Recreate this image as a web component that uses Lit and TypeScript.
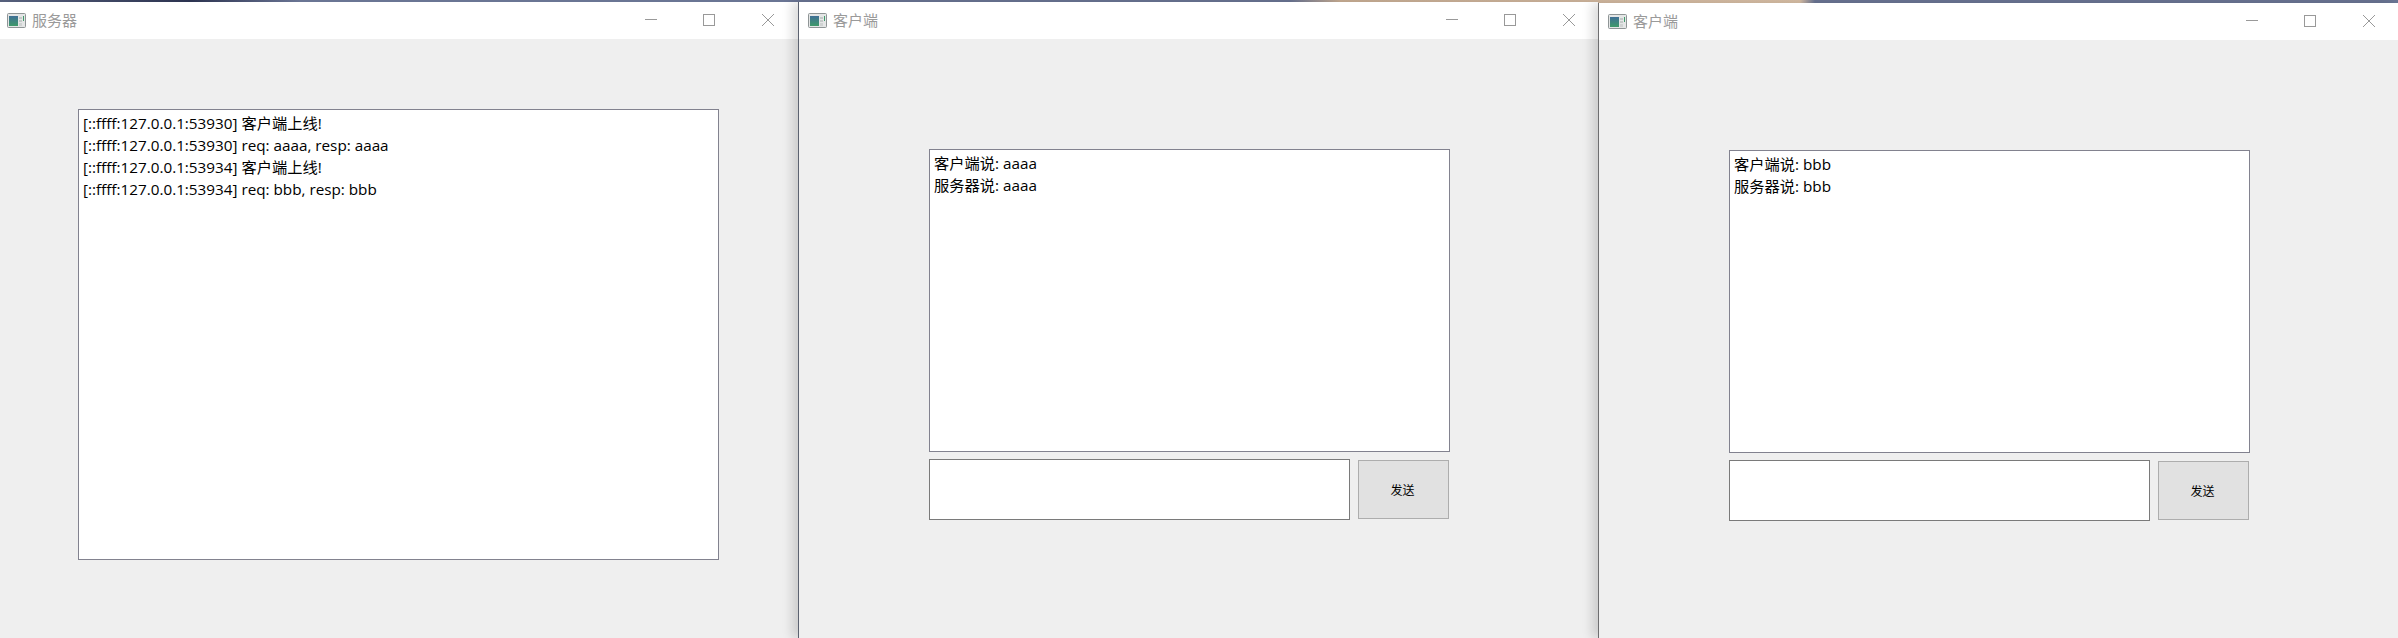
import { LitElement, html, css } from "lit";
import { customElement, property } from "lit/decorators.js";

const FONT = css`"Open Sans", "Noto Sans CJK SC", sans-serif`;

@customElement("win-frame")
class WinFrame extends LitElement {
  @property() label = "";
  static styles = css`
    :host { display: flex; flex-direction: column; height: 100%; background: #efefef; }
    .bar { height: 37px; flex: none; background: #fff; display: flex; align-items: center; padding-left: var(--bar-pad, 9px); }
    .icon { width: 19px; height: 17px; flex: none; margin-right: 6px; }
    .title { font: 15px/37px ${FONT}; color: #9a9a9a; flex: 1; }
    .ctl { display: flex; gap: 45px; flex: none; margin-right: var(--ctl-pad, 22px); }
    .ctl svg { width: 13px; height: 13px; display: block; }
    .ctl svg:last-child { margin-left: 1px; }
    .body { flex: 1; min-height: 0; }
  `;
  render() {
    return html`<div class="bar">
        <svg class="icon" viewBox="0 0 19 17">
          <defs>
            <linearGradient id="g" x1="0" y1="0" x2="0" y2="1">
              <stop offset="0" stop-color="#3f6f96" />
              <stop offset="1" stop-color="#3f9a6a" />
            </linearGradient>
          </defs>
          <rect x=".5" y="1.5" width="18" height="14" rx="1" fill="#e4e6e6" stroke="#8f9596" />
          <rect x="2" y="4" width="9" height="10" fill="url(#g)" />
          <rect x="12" y="5" width="3" height="2" fill="#c4c8c8" />
          <rect x="12" y="8" width="3" height="2" fill="#c4c8c8" />
          <rect x="12" y="11" width="3" height="3" fill="#cfd2d2" />
          <rect x="16" y="4" width="1" height="5" fill="#3f9a6a" />
        </svg>
        <span class="title">${this.label}</span>
        <div class="ctl">
          <svg viewBox="0 0 13 13"><path d="M0 5.5H12" stroke="#999" fill="none" /></svg>
          <svg viewBox="0 0 13 13"><rect x=".5" y=".5" width="11" height="11" stroke="#999" fill="none" /></svg>
          <svg viewBox="0 0 13 13"><path d="M0 0L12 12M12 0L0 12" stroke="#999" fill="none" /></svg>
        </div>
      </div>
      <div class="body"><slot></slot></div>`;
  }
}

@customElement("text-log")
class TextLog extends LitElement {
  @property({ type: Array }) lines: string[] = [];
  static styles = css`
    :host {
      display: block; box-sizing: border-box; height: 100%;
      background: #fff; border: 1px solid #82828f;
      padding: 2px 4px;
      font: 15.25px/22px ${FONT}; color: #000; white-space: pre;
    }
    div { height: 22px; }
  `;
  render() {
    return this.lines.map((l) => html`<div>${l}</div>`);
  }
}

@customElement("client-pane")
class ClientPane extends LitElement {
  @property({ type: Array }) lines: string[] = [];
  static styles = css`
    :host { display: block; padding: 110px 0 0 130px; }
    .col { width: 521px; display: flex; flex-direction: column; gap: 7px; }
    .log { height: 303px; }
    .row { display: flex; gap: 8px; align-items: center; padding-right: 1px; }
    input {
      box-sizing: border-box; width: 421px; height: 61px; margin: 0;
      border: 1px solid #7a7a7a; background: #fff; outline: none; padding: 0 4px;
    }
    button {
      box-sizing: border-box; width: 91px; height: 59px; margin: 0; padding: 0 2px 0 0;
      border: 1px solid #adadad; background: #e1e1e1; color: #000;
      font: 12px ${FONT};
    }
  `;
  render() {
    return html`<div class="col">
      <text-log class="log" .lines=${this.lines}></text-log>
      <div class="row">
        <input type="text" />
        <button>发送</button>
      </div>
    </div>`;
  }
}

@customElement("app-root")
class AppRoot extends LitElement {
  static styles = css`
    :host {
      display: flex; width: 2398px; height: 638px; overflow: hidden;
      background: linear-gradient(90deg, #56607c 0, #2c3350 190px, #6a7594 300px, #6a7594 1290px, #c9ae95 1340px, #d8bfa6 1800px, #6a7594 1815px, #6a7594 100%);
    }
    .w { position: relative; box-sizing: border-box; }
    .w1 { width: 798px; margin-top: 2px; --bar-pad: 7px; --ctl-pad: 23px; }
    .w2 { width: 800px; margin-top: 2px; border-left: 1px solid #5c6270; box-shadow: -6px 0 10px rgba(0, 0, 0, 0.14); }
    .w3 { width: 800px; margin-top: 3px; border-left: 1px solid #6e6e70; box-shadow: -6px 0 10px rgba(0, 0, 0, 0.14); }
    .server { display: block; padding: 70px 0 0 78px; }
    .server text-log { width: 641px; height: 451px; }
  `;
  render() {
    return html`
      <div class="w w1">
        <win-frame label="服务器">
          <div class="server">
            <text-log
              .lines=${[
                "[::ffff:127.0.0.1:53930] 客户端上线!",
                "[::ffff:127.0.0.1:53930] req: aaaa, resp: aaaa",
                "[::ffff:127.0.0.1:53934] 客户端上线!",
                "[::ffff:127.0.0.1:53934] req: bbb, resp: bbb",
              ]}
            ></text-log>
          </div>
        </win-frame>
      </div>
      <div class="w w2">
        <win-frame label="客户端">
          <client-pane .lines=${["客户端说: aaaa", "服务器说: aaaa"]}></client-pane>
        </win-frame>
      </div>
      <div class="w w3">
        <win-frame label="客户端">
          <client-pane .lines=${["客户端说: bbb", "服务器说: bbb"]}></client-pane>
        </win-frame>
      </div>
    `;
  }
}
